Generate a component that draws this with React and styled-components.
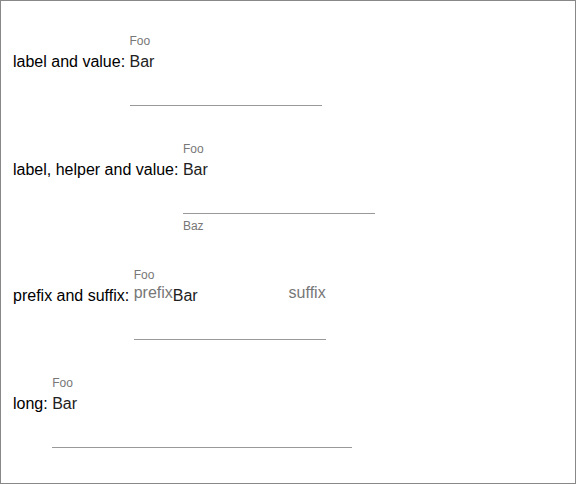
import React from "react";
import styled, { createGlobalStyle } from "styled-components";

const GlobalStyle = createGlobalStyle`
    html, body {
        margin: 0;
        padding: 0;
        background: #ffffff;
    }
    body {
        font-family: "Liberation Sans", Arial, sans-serif;
    }
`

const Page = styled.div`
    box-sizing: border-box;
    width: 576px;
    height: 484px;
    border: 1px solid #888888;
    padding: 32px 12px 0 12px;
    display: flex;
    flex-direction: column;
    gap: 35px;
    overflow: hidden;
`

const Row = styled.div`
    display: flex;
    align-items: flex-start;
`

const Label = styled.span`
    margin-top: 19px;
    margin-right: 4.45px;
    font-size: 16px;
    line-height: 20px;
    color: #000000;
    white-space: nowrap;
`

const Field = styled.div`
    display: flex;
    flex-direction: column;
    width: ${(p) => p.$width}px;
`

const FloatLabel = styled.span`
    font-size: 12px;
    line-height: 16px;
    color: #777777;
`

const Control = styled.div`
    display: flex;
    align-items: flex-start;
    padding-top: 3px;
    height: 53px;
    border-bottom: 1px solid #999999;
`

const Value = styled.span`
    font-size: 16px;
    line-height: 20px;
    color: #212121;
`

const Affix = styled.span`
    font-size: 16px;
    line-height: 13px;
    color: #777777;
    ${(p) => p.$end && "margin-left: auto;"}
`

const Helper = styled.span`
    margin-top: 6px;
    font-size: 12px;
    line-height: 12px;
    color: #777777;
`

const TextField = ({ label, value, helper, prefix, suffix, width = 192 }) => (
    <Field $width={width}>
        <FloatLabel>{label}</FloatLabel>
        <Control>
            {prefix && <Affix>{prefix}</Affix>}
            <Value>{value}</Value>
            {suffix && <Affix $end>{suffix}</Affix>}
        </Control>
        {helper && <Helper>{helper}</Helper>}
    </Field>
)

const App = () => {
  return (
    <>
      <GlobalStyle />
      <Page>
        <Row>
          <Label>label and value:</Label>
          <TextField label="Foo" value="Bar" />
        </Row>
        <Row>
          <Label>label, helper and value:</Label>
          <TextField label="Foo" value="Bar" helper="Baz" />
        </Row>
        <Row>
          <Label>prefix and suffix:</Label>
          <TextField label="Foo" value="Bar" prefix="prefix" suffix="suffix" />
        </Row>
        <Row>
          <Label>long:</Label>
          <TextField label="Foo" value="Bar" width={300} />
        </Row>
      </Page>
    </>
  );
};

export default App;
